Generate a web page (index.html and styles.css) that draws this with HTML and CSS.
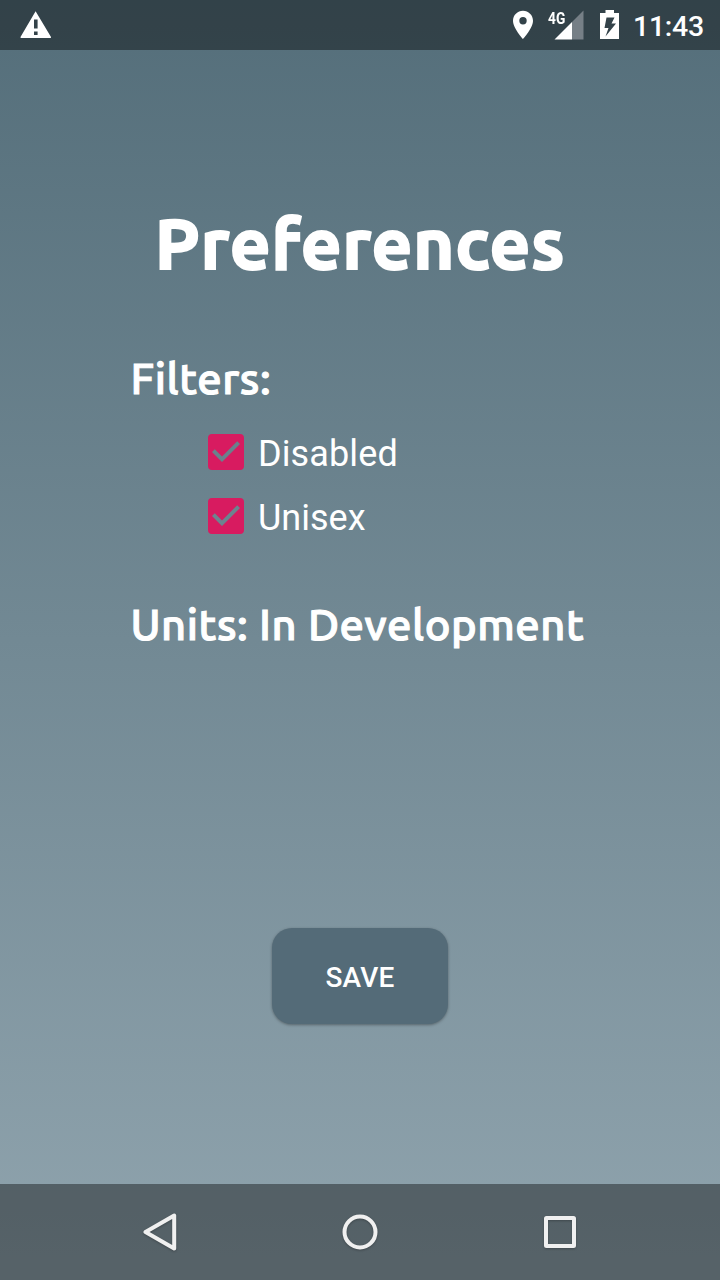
FILE: index.html
```html
<!DOCTYPE html>
<html lang="en">
<head>
<meta charset="utf-8">
<title>Preferences</title>
<link rel="stylesheet" href="styles.css">
</head>
<body>
<div class="screen">
  <header class="status-bar">
    <svg class="warning" width="32" height="30" viewBox="0 0 32 30"><path fill="#fff" fill-rule="evenodd" d="M15.600 1.200 31 27a.8.8 0 0 1-.6 1H1.100a.8.8 0 0 1-.6-1zM14 9.500v9h3.600v-9zm0 12v3.600h3.600v-3.600z"/></svg>
    <svg class="location" width="20" height="30" viewBox="0 0 20 30"><path fill="#fff" fill-rule="evenodd" d="M10 .8C4.500.8 0 5.200 0 10.700 0 18 10 29 10 29s10-11 10-18.300C20 5.200 15.500.8 10 .8zM10 7a3.700 3.700 0 1 1 0 7.400A3.700 3.700 0 0 1 10 7z"/></svg>
    <div class="signal">
      <svg width="36" height="30" viewBox="0 0 36 30"><path fill="#767f86" d="M35.500.5v29H24V12z"/><path fill="#fff" d="M24 12v17.500H6.500z"/></svg>
      <span class="network">4G</span>
    </div>
    <svg class="battery" width="20" height="30" viewBox="0 0 20 30"><path fill="#fff" fill-rule="evenodd" d="M5.500 0h8.500v3H19v26H0V3h5.500zM6.500 7.500 4.500 18h4l-3 8.500L16 13.500h-4.500L14.500 7.500z"/></svg>
    <time class="clock">11:43</time>
  </header>
  <main class="content">
    <h1 class="title">Preferences</h1>
    <h2 class="section filters">Filters:</h2>
    <div class="options">
      <label class="option"><svg class="check" width="36" height="36" viewBox="0 0 36 36"><path fill="#d81b60" fill-rule="evenodd" d="M4 0h28a4 4 0 0 1 4 4v28a4 4 0 0 1-4 4H4a4 4 0 0 1-4-4V4a4 4 0 0 1 4-4zM14 28 32 10l-2.800-2.800L14 22.400l-7.200-7.200L4 18z"/></svg><span class="disabled">Disabled</span></label>
      <label class="option"><svg class="check" width="36" height="36" viewBox="0 0 36 36"><path fill="#d81b60" fill-rule="evenodd" d="M4 0h28a4 4 0 0 1 4 4v28a4 4 0 0 1-4 4H4a4 4 0 0 1-4-4V4a4 4 0 0 1 4-4zM14 28 32 10l-2.800-2.800L14 22.400l-7.200-7.200L4 18z"/></svg><span>Unisex</span></label>
    </div>
    <h2 class="section units">Units: In Development</h2>
    <button class="save">SAVE</button>
  </main>
  <nav class="nav-bar">
    <svg width="40" height="40" viewBox="0 0 40 40"><path d="M34.200 3.500v33L5.500 20z"/></svg>
    <svg width="40" height="40" viewBox="0 0 40 40"><circle cx="20" cy="20" r="15.500"/></svg>
    <svg width="40" height="40" viewBox="0 0 40 40"><rect x="6" y="6" width="28" height="28" rx=".5"/></svg>
  </nav>
</div>
</body>
</html>
```

FILE: styles.css
```css
* { box-sizing: border-box; }
body { margin: 0; font-family: Roboto, sans-serif; color: #fff; }
svg { display: block; flex: none; }
.screen {
  width: 720px;
  height: 1280px;
  display: flex;
  flex-direction: column;
  background: linear-gradient(#546e7a, #90a4ae);
  overflow: hidden;
}
.status-bar {
  height: 50px;
  flex: none;
  display: flex;
  align-items: flex-start;
  padding: 10px 16px 0 20px;
  background: rgba(0, 0, 0, .4);
}
.location { margin-left: auto; }
.signal { position: relative; margin-left: 15px; }
.network {
  position: absolute;
  left: 0;
  top: 0;
  font-size: 17px;
  line-height: 16px;
  font-weight: 700;
  transform: scaleX(.81);
  transform-origin: left;
}
.battery { margin-left: 16px; }
.clock {
  width: 71px;
  margin-left: 13px;
  font-size: 28.5px;
  line-height: 34px;
  font-weight: 500;
  letter-spacing: -.3px;
  white-space: nowrap;
}
.content {
  flex: 1;
  display: flex;
  flex-direction: column;
  align-items: flex-start;
}
.title, .section { margin: 0; font-family: Ubuntu, "Noto Sans", sans-serif; white-space: nowrap; }
.title {
  align-self: center;
  margin-top: 143px;
  font-size: 71px;
  line-height: 100px;
  font-weight: 700;
  letter-spacing: .65px;
  -webkit-text-stroke: 2px #fff;
}
.section {
  margin-left: 130.500px;
  font-size: 43.5px;
  line-height: 60px;
  font-weight: 500;
  letter-spacing: .55px;
  -webkit-text-stroke: 1.1px #fff;
}
.filters { margin-top: 55px; }
.options { margin: 12px 0 0 208px; }
.option { height: 64px; display: flex; align-items: center; gap: 14px; font-size: 36px; }
.option span { padding-top: 4px; }
.disabled { letter-spacing: .12px; }
.units { margin-top: 46px; }
.save {
  align-self: center;
  width: 176px;
  height: 96px;
  margin-top: 274px;
  padding: 2px 0 0;
  border: 0;
  border-radius: 20px;
  background: #546b78;
  box-shadow: 0 1px 3px rgba(0, 0, 0, .35);
  color: #fff;
  font: 500 28px Roboto, sans-serif;
  letter-spacing: .2px;
}
.nav-bar {
  height: 96px;
  flex: none;
  display: flex;
  justify-content: space-between;
  align-items: center;
  padding: 0 140px;
  background: rgba(0, 0, 0, .4);
}
.nav-bar svg {
  fill: none;
  stroke: #f0f0f0;
  stroke-width: 4;
  stroke-linejoin: round;
  filter: drop-shadow(0 1px 1px rgba(0, 0, 0, .25));
}
```
